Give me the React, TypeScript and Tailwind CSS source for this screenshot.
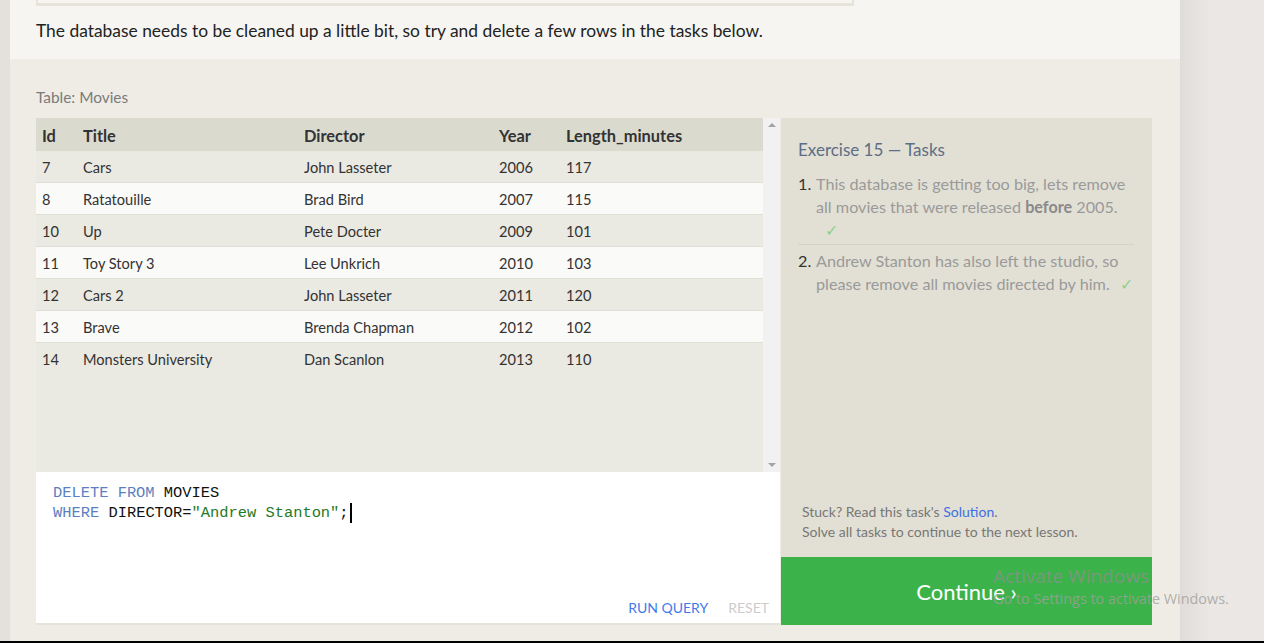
import React from 'react';

const rows = [
  { id: 7, title: 'Cars', director: 'John Lasseter', year: 2006, len: 117 },
  { id: 8, title: 'Ratatouille', director: 'Brad Bird', year: 2007, len: 115 },
  { id: 10, title: 'Up', director: 'Pete Docter', year: 2009, len: 101 },
  { id: 11, title: 'Toy Story 3', director: 'Lee Unkrich', year: 2010, len: 103 },
  { id: 12, title: 'Cars 2', director: 'John Lasseter', year: 2011, len: 120 },
  { id: 13, title: 'Brave', director: 'Brenda Chapman', year: 2012, len: 102 },
  { id: 14, title: 'Monsters University', director: 'Dan Scanlon', year: 2013, len: 110 },
];

const sans = "font-['Lato','Open_Sans',sans-serif]";

export default function App() {
  return (
    <div className={`relative h-[643px] w-[1264px] overflow-hidden bg-[#ebe7e4] ${sans}`}>
      <div className="flex h-[641px]">
        {/* left gutter */}
        <div className="w-[10px] bg-[#e4e0dc]" />

        {/* main column */}
        <div className="flex w-[1170px] flex-col">
          <div className="h-[59px] bg-[#f6f5f1] px-[26px]">
            <div className="h-[6px] w-[818px] border-x-2 border-b-[3px] border-[#e6e4d9] bg-[#f6f5f1]" />
            <p className="mt-[13px] text-[17.4px] leading-[24px] text-[#222]">
              The database needs to be cleaned up a little bit, so try and delete a few rows in the tasks below.
            </p>
          </div>

          <div className="flex-1 bg-[#efece5] px-[26px] pt-[27px]">
            <p className="text-[15.4px] leading-[22px] text-[#7b7b7b]">Table: Movies</p>

            <div className="mt-[10px] flex h-[507px]">
              {/* left: table + editor */}
              <div className="flex w-[744px] flex-col">
                <div className="flex h-[354px]">
                  <div className="flex-1 bg-[#eae9e2]">
                    <div className="flex h-[33px] items-center bg-[#dbdacf] pt-[3px] text-[16.4px] font-bold text-[#333]">
                      <div className="w-[41px] pl-[6px]">Id</div>
                      <div className="w-[221px] pl-[6px]">Title</div>
                      <div className="w-[195px] pl-[6px]">Director</div>
                      <div className="w-[67px] pl-[6px]">Year</div>
                      <div className="flex-1 pl-[6px]">Length_minutes</div>
                    </div>
                    {rows.map((r, i) => (
                      <div
                        key={r.id}
                        className={`flex h-[32px] items-center border-b border-[#dfdfd8] pt-[2px] text-[14.6px] text-[#333] ${
                          i % 2 === 0 ? 'bg-[#eae9e2]' : 'bg-[#fafaf9]'
                        } ${i === rows.length - 1 ? 'border-b-0' : ''}`}
                      >
                        <div className="w-[41px] pl-[6px]">{r.id}</div>
                        <div className="w-[221px] pl-[6px]">{r.title}</div>
                        <div className="w-[195px] pl-[6px]">{r.director}</div>
                        <div className="w-[67px] pl-[6px]">{r.year}</div>
                        <div className="flex-1 pl-[6px]">{r.len}</div>
                      </div>
                    ))}
                  </div>
                  {/* scrollbar */}
                  <div className="flex w-[17px] flex-col items-center justify-between bg-[#f1f1f1] py-[5px]">
                    <span className="h-0 w-0 border-x-[4px] border-b-[4px] border-x-transparent border-b-[#a3a3a3]" />
                    <span className="h-0 w-0 border-x-[4px] border-t-[4px] border-x-transparent border-t-[#a3a3a3]" />
                  </div>
                </div>

                <div className="relative h-[153px] border-b-2 border-[#e4e3dc] bg-white px-[17px] pt-[11px] font-['Liberation_Mono',monospace] text-[15.4px] leading-[20px]">
                  <div>
                    <span className="text-[#5b7fc0]">DELETE FROM</span> <span className="text-[#111]">MOVIES</span>
                  </div>
                  <div>
                    <span className="text-[#5b7fc0]">WHERE</span>{' '}
                    <span className="text-[#111]">DIRECTOR=</span>
                    <span className="text-[#1f7a26]">"Andrew Stanton"</span>
                    <span className="text-[#111]">;</span>
                    <span className="ml-[1px] inline-block h-[20px] w-[2px] align-top bg-black" />
                  </div>
                  <div className={`absolute bottom-[5px] right-[11px] flex gap-[20px] text-[14px] ${sans}`}>
                    <span className="text-[#3f7bea]">RUN QUERY</span>
                    <span className="text-[#cccccc]">RESET</span>
                  </div>
                </div>
              </div>

              {/* right: tasks */}
              <div className="ml-[1px] flex w-[371px] flex-col">
                <div className="flex flex-1 flex-col bg-[#e2e0d4] pt-[21px] pl-[17px] pr-[9px]">
                  <h3 className="text-[17px] leading-[22px] text-[#5d6d86]">Exercise 15 — Tasks</h3>
                  <ol className="mt-[11px] pr-[9px] text-[16.2px] leading-[23px] text-[#9a9a9a]">
                    <li className="flex border-b border-[#d5d3c8] pb-[3px]">
                      <span className="w-[18px] text-[#333]">1.</span>
                      <span className="flex-1">
                        This database is getting too big, lets remove all movies that were released{' '}
                        <b className="text-[#8a8a8a]">before</b> 2005.
                        <br />
                        <span className="ml-[9px] text-[#8fd18f]">✓</span>
                      </span>
                    </li>
                    <li className="mt-[4px] flex">
                      <span className="w-[18px] text-[#333]">2.</span>
                      <span className="flex-1">
                        Andrew Stanton has also left the studio, so please remove all movies directed by him.
                        <span className="ml-[10px] text-[#8fd18f]">✓</span>
                      </span>
                    </li>
                  </ol>
                  <div className="mt-auto pb-[15px] pl-[4px] text-[14px] leading-[20px] text-[#777]">
                    <p>
                      Stuck? Read this task's <span className="text-[#3e6fe0]">Solution</span>.
                    </p>
                    <p>Solve all tasks to continue to the next lesson.</p>
                  </div>
                </div>
                <div className="flex h-[68px] items-center justify-center bg-[#3bb34a] text-[22px] text-white">
                  Continue ›
                </div>
              </div>
            </div>
          </div>
        </div>

        {/* right shadow */}
        <div className="w-[30px] bg-gradient-to-r from-[#e0dcd9] to-[#ebe7e4]" />
      </div>
      <div className="h-[2px] bg-black" />

      {/* Windows watermark */}
      <div className="pointer-events-none absolute left-[993px] top-[564px] font-['Open_Sans',sans-serif] text-[#8a8f8a]/80">
        <p className="text-[19px] leading-[25px]">Activate Windows</p>
        <p className="text-[14.4px] leading-[20px] text-[#a09e9b]/80">Go to Settings to activate Windows.</p>
      </div>
    </div>
  );
}
